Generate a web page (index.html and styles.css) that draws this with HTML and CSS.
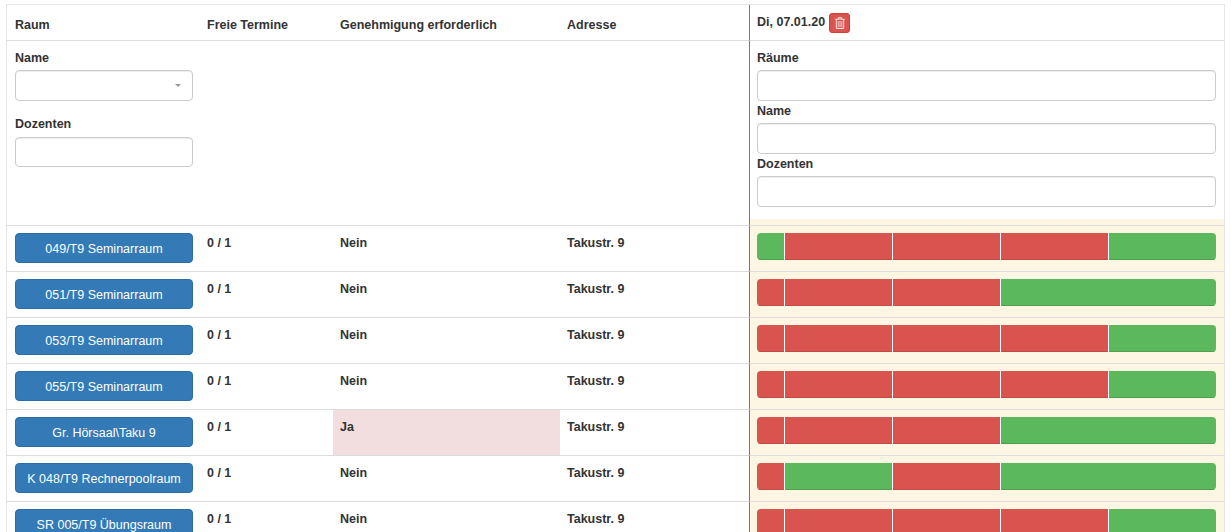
FILE: index.html
```html
<!DOCTYPE html>
<html lang="de">
<head>
<meta charset="utf-8">
<title>Raumplanung</title>
<link rel="stylesheet" href="styles.css">
</head>
<body>
<table class="rooms">
  <colgroup>
    <col class="c-room"><col class="c-free"><col class="c-perm"><col class="c-addr"><col class="c-day">
  </colgroup>
  <thead>
    <tr class="head">
      <th>Raum</th>
      <th>Freie Termine</th>
      <th class="tight">Genehmigung erforderlich</th>
      <th class="tight">Adresse</th>
      <th class="day">
        <div class="day-head">
          <span class="day-name">Di, 07.01.20</span>
          <button class="trash" type="button" aria-label="Löschen">
            <svg width="10" height="12" viewBox="0 0 10 12"><path fill="none" stroke="#fff" stroke-opacity=".85" d="M3.5 1.8V.6h3v1.2M.2 2.2h9.6M1.3 2.5v8.9h7.4V2.5"/><path fill="none" stroke="#fff" stroke-opacity=".7" d="M3.2 4v6.2M5 4v6.2M6.8 4v6.2"/></svg>
          </button>
        </div>
      </th>
    </tr>
    <tr class="filters">
      <th class="filter-left">
        <label class="lbl">Name</label>
        <div class="select"><span class="caret"></span></div>
        <label class="lbl lbl-second">Dozenten</label>
        <input class="inp inp-short" type="text">
      </th>
      <th></th><th></th><th></th>
      <th class="day filter-day">
        <div class="filter-box">
          <label class="lbl">Räume</label>
          <input class="inp" type="text">
          <label class="lbl">Name</label>
          <input class="inp" type="text">
          <label class="lbl">Dozenten</label>
          <input class="inp" type="text">
        </div>
      </th>
    </tr>
  </thead>
  <tbody>
    <tr>
      <td class="room"><button class="room-btn" type="button">049/T9 Seminarraum</button></td>
      <td>0 / 1</td><td class="tight">Nein</td><td class="tight">Takustr. 9</td>
      <td class="day slots"><div class="bar"><i class="g"></i><i class="r"></i><i class="r"></i><i class="r"></i><i class="g"></i></div></td>
    </tr>
    <tr>
      <td class="room"><button class="room-btn" type="button">051/T9 Seminarraum</button></td>
      <td>0 / 1</td><td class="tight">Nein</td><td class="tight">Takustr. 9</td>
      <td class="day slots"><div class="bar"><i class="r"></i><i class="r"></i><i class="r"></i><i class="g wide"></i></div></td>
    </tr>
    <tr>
      <td class="room"><button class="room-btn" type="button">053/T9 Seminarraum</button></td>
      <td>0 / 1</td><td class="tight">Nein</td><td class="tight">Takustr. 9</td>
      <td class="day slots"><div class="bar"><i class="r"></i><i class="r"></i><i class="r"></i><i class="r"></i><i class="g"></i></div></td>
    </tr>
    <tr>
      <td class="room"><button class="room-btn" type="button">055/T9 Seminarraum</button></td>
      <td>0 / 1</td><td class="tight">Nein</td><td class="tight">Takustr. 9</td>
      <td class="day slots"><div class="bar"><i class="r"></i><i class="r"></i><i class="r"></i><i class="r"></i><i class="g"></i></div></td>
    </tr>
    <tr>
      <td class="room"><button class="room-btn" type="button">Gr. Hörsaal\Taku 9</button></td>
      <td>0 / 1</td><td class="tight required">Ja</td><td class="tight">Takustr. 9</td>
      <td class="day slots"><div class="bar"><i class="r"></i><i class="r"></i><i class="r"></i><i class="g wide"></i></div></td>
    </tr>
    <tr>
      <td class="room"><button class="room-btn" type="button">K 048/T9 Rechnerpoolraum</button></td>
      <td>0 / 1</td><td class="tight">Nein</td><td class="tight">Takustr. 9</td>
      <td class="day slots"><div class="bar"><i class="r"></i><i class="g"></i><i class="r"></i><i class="g wide"></i></div></td>
    </tr>
    <tr>
      <td class="room"><button class="room-btn" type="button">SR 005/T9 Übungsraum</button></td>
      <td>0 / 1</td><td class="tight">Nein</td><td class="tight">Takustr. 9</td>
      <td class="day slots"><div class="bar"><i class="r"></i><i class="r"></i><i class="r"></i><i class="r"></i><i class="g"></i></div></td>
    </tr>
  </tbody>
</table>
</body>
</html>
```
FILE: styles.css
```css
* { box-sizing: border-box; }
html, body { height: 532px; overflow: hidden; }
body {
  margin: 0;
  padding: 4px 6px 0;
  background: #fff;
  color: #333;
  font: bold 12.5px/17px "Liberation Sans", Arial, sans-serif;
}
.rooms {
  width: 1219px;
  table-layout: fixed;
  border-collapse: separate;
  border-spacing: 0;
  border-top: 1px solid #e6e6e6;
  border-left: 1px solid #e6e6e6;
  border-right: 1px solid #e6e6e6;
}
.c-room { width: 192px; }
.c-free { width: 134px; }
.c-perm { width: 227px; }
.c-addr { width: 189px; }
.c-day { width: 475px; }
th, td {
  padding: 9px 7px 0 8px;
  border-bottom: 1px solid #ddd;
  text-align: left;
  vertical-align: top;
  font-weight: bold;
}
.tight { padding-left: 7px; }
.head th { height: 36px; padding-top: 0; padding-bottom: 6px; vertical-align: bottom; }
.filters th { height: 185px; padding-top: 9px; }
tbody td { height: 46px; }
.day {
  border-left: 1px solid #777;
  padding-left: 7px;
  padding-right: 8px;
}
.head .day { padding-top: 8px; padding-bottom: 0; vertical-align: top; }
.day-head { display: flex; align-items: flex-start; gap: 4px; }
.day-name { margin-top: 1px; }
.trash {
  display: flex;
  align-items: center;
  justify-content: center;
  width: 21px;
  height: 20px;
  padding: 0;
  border: 1px solid #d43f3a;
  border-radius: 3px;
  background: #d9534f;
}
.lbl { display: block; }
.filters .filter-left { padding-right: 6px; }
.filter-left .lbl { margin-bottom: 3px; }
.filter-left .lbl-second { margin-top: 15px; margin-bottom: 4px; }
.select, .inp {
  display: block;
  width: 100%;
  height: 31px;
  border: 1px solid #ccc;
  border-radius: 4px;
  background: #fff;
  box-shadow: inset 0 1px 1px rgba(0, 0, 0, .075);
}
.select { display: flex; align-items: center; justify-content: flex-end; padding-right: 11px; }
.caret {
  width: 0;
  height: 0;
  border-left: 3px solid transparent;
  border-right: 3px solid transparent;
  border-top: 3px solid #999;
}
.inp { margin: 0; padding: 0; font: inherit; }
.lbl + .inp { margin-top: 3px; margin-bottom: 2px; }
.filter-left .lbl + .inp-short { height: 30px; margin: 0; }
.filters .filter-day { padding: 0; background: #fdf6e3; }
.filter-box { height: 178px; padding: 9px 8px 0 7px; background: #fff; }
.room { padding: 7px 6px 0 8px; }
.room-btn {
  display: block;
  width: 178px;
  height: 30px;
  padding: 3px 0 0;
  border: 1px solid #2e6da4;
  border-radius: 4px;
  background: #337ab7;
  color: #fff;
  font: 12.5px/17px "Liberation Sans", Arial, sans-serif;
  white-space: nowrap;
}
.required { background: #f2dede; }
.slots { padding-top: 7px; padding-bottom: 0; background: #fdf6e3; }
.bar {
  display: grid;
  grid-template-columns: 27px repeat(4, 107px);
  gap: 1px;
  height: 27px;
  background: #fff;
  border-radius: 4px;
  overflow: hidden;
}
.bar i { display: block; }
.r { background: #d9534f; border-bottom: 1px solid #c24a46; }
.g { background: #5cb85c; border-bottom: 1px solid #4f9f4f; }
.wide { grid-column: span 2; }
```
